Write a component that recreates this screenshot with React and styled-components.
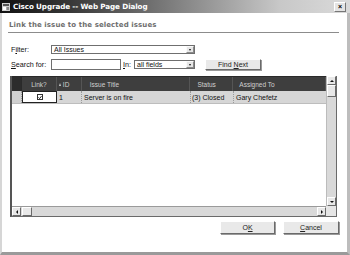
import React from "react";
import styled, { createGlobalStyle } from "styled-components";

const Global = createGlobalStyle`
  html, body { margin: 0; padding: 0; background: #ffffff; }
  body { width: 350px; height: 255px; overflow: hidden; font-family: "Liberation Sans", Arial, sans-serif; }
`;

const Window = styled.div`
  width: 350px;
  height: 255px;
  box-sizing: border-box;
  display: flex;
  flex-direction: column;
  background: #fff;
  border-left: 2px solid #d6d6d6;
  border-right: 3px solid #bdbdbd;
  border-bottom: 3px solid #9a9a9a;
`;

const TitleBar = styled.div`
  height: 13px;
  margin-left: -2px;
  margin-right: -3px;
  display: flex;
  align-items: center;
  padding: 0 4px 0 2px;
  background: linear-gradient(to right, #111 0%, #333 18%, #808080 50%, #c8c8c8 80%, #dadada 100%);
  flex-shrink: 0;
`;

const TitleIcon = styled.span`
  width: 8px;
  height: 8px;
  margin-right: 3px;
  display: inline-flex;
`;

const TitleText = styled.span`
  color: #fff;
  font-family: "DejaVu Sans", sans-serif;
  font-weight: bold;
  font-size: 7.2px;
  letter-spacing: -0.1px;
  flex: 1;
`;

const CloseBtn = styled.span`
  width: 10px;
  height: 8px;
  background: #e4e4e4;
  border: 1px solid #fff;
  border-right-color: #777;
  border-bottom-color: #777;
  display: flex;
  align-items: center;
  justify-content: center;
  font-size: 7px;
  font-weight: bold;
  color: #000;
  line-height: 1;
`;

const Body = styled.div`
  flex: 1;
  display: flex;
  flex-direction: column;
  padding: 0 10px 0 6px;
`;

const Heading = styled.div`
  margin-top: 8px;
  height: 11px;
  border-bottom: 1px solid #8c8c8c;
  color: #6e6e6e;
  font-family: "DejaVu Sans", sans-serif;
  font-size: 7px;
  font-weight: bold;
  letter-spacing: 0.1px;
  line-height: 9px;
  margin-right: -2px;
  padding-left: 1px;
`;

const Row = styled.div`
  display: flex;
  align-items: center;
  height: ${(p) => p.$h || 11}px;
  margin-top: ${(p) => p.$mt || 0}px;
  padding-left: 3px;
  font-size: 7px;
  color: #111;
`;

const Label = styled.span`
  width: ${(p) => p.$w}px;
  font-size: 7.2px;
  white-space: nowrap;
  u { text-decoration: underline; }
`;

const SelectBox = styled.div`
  width: ${(p) => p.$w}px;
  height: 9px;
  box-sizing: border-box;
  border: 1px solid #6f6f6f;
  background: #fff;
  display: flex;
  align-items: center;
  font-size: 7px;
  color: #111;
`;

const SelectText = styled.span`
  flex: 1;
  padding-left: 2px;
  white-space: nowrap;
  overflow: hidden;
`;

const DropBtn = styled.span`
  width: 8px;
  height: 7px;
  box-sizing: border-box;
  background: #e6e6e6;
  border: 1px solid #fafafa;
  border-right-color: #8a8a8a;
  border-bottom-color: #8a8a8a;
  display: flex;
  align-items: center;
  justify-content: center;
  &::after {
    content: "";
    border-left: 1.5px solid transparent;
    border-right: 1.5px solid transparent;
    border-top: 2px solid #111;
  }
`;

const TextInput = styled.div`
  width: 70px;
  height: 11px;
  box-sizing: border-box;
  border: 1px solid #6f6f6f;
  background: #fff;
`;

const PushButton = styled.div`
  width: ${(p) => p.$w}px;
  height: ${(p) => p.$h || 11}px;
  box-sizing: border-box;
  margin-left: ${(p) => p.$ml || 0}px;
  background: #e9e9e9;
  border: 1px solid #fff;
  border-right-color: #6a6a6a;
  border-bottom-color: #6a6a6a;
  box-shadow: 1px 1px 0 #9a9a9a;
  display: flex;
  align-items: center;
  justify-content: center;
  font-size: 7px;
  color: #222;
  u { text-decoration: underline; }
`;

const BtnText = styled.span`
  white-space: pre;
`;

const GridFrame = styled.div`
  margin-top: 6px;
  margin-left: 2px;
  width: 327px;
  height: 141px;
  box-sizing: border-box;
  border: 1px solid #6a6a6a;
  border-top: none;
  border-left: 2px solid #555;
  display: grid;
  grid-template-columns: 1fr 10px;
  grid-template-rows: 1fr 10px;
  background: #fff;
`;

const TableArea = styled.div`
  overflow: hidden;
  display: flex;
  flex-direction: column;
`;

const HeaderRow = styled.div`
  display: flex;
  height: 14px;
  background: #3e3e3e;
  border-top: 1px solid #2a2a2a;
  flex-shrink: 0;
`;

const HeadCell = styled.div`
  width: ${(p) => p.$w}px;
  box-sizing: border-box;
  display: flex;
  align-items: center;
  justify-content: ${(p) => (p.$center ? "center" : "flex-start")};
  padding-left: ${(p) => p.$pl || 0}px;
  color: #d0d0d0;
  font-size: 6.5px;
  border-right: 1px solid ${(p) => (p.$sel ? "#2a2a2a" : "#555")};
  background: ${(p) => (p.$sel ? "#2c2c2c" : "transparent")};
  white-space: nowrap;
`;

const SortArrow = styled.span`
  display: inline-block;
  width: 0;
  height: 0;
  margin-right: 2px;
  border-left: 1.5px solid transparent;
  border-right: 1.5px solid transparent;
  border-bottom: 3px solid #cfcfcf;
`;

const DataRow = styled.div`
  display: flex;
  height: 12px;
  background: #d6d6d6;
  border-bottom: 1px solid #bdbdbd;
  flex-shrink: 0;
  width: 315px;
`;

const Cell = styled.div`
  width: ${(p) => p.$w}px;
  box-sizing: border-box;
  display: flex;
  align-items: center;
  justify-content: ${(p) => (p.$center ? "center" : "flex-start")};
  padding-left: ${(p) => p.$pl ?? 2}px;
  font-size: 7px;
  color: #111;
  white-space: nowrap;
  border-right: 1px dotted #9a9a9a;
  background: ${(p) => p.$bg || "transparent"};
  ${(p) => (p.$boxed ? "border: 1px solid #222;" : "")}
`;

const CheckBox = styled.span`
  width: 6px;
  height: 6px;
  box-sizing: border-box;
  border: 1px solid #333;
  background: #fff;
  display: flex;
  align-items: center;
  justify-content: center;
`;

const VScroll = styled.div`
  background: #d9d9d9;
  display: flex;
  flex-direction: column;
  justify-content: space-between;
  border-left: 1px solid #bcbcbc;
`;

const HScroll = styled.div`
  background: #d9d9d9;
  display: flex;
  align-items: stretch;
  justify-content: space-between;
  border-top: 1px solid #9a9a9a;
`;

const Corner = styled.div`
  background: #e6e6e6;
`;

const ScrollBtn = styled.div`
  width: ${(p) => p.$w || 9}px;
  height: ${(p) => p.$h || 9}px;
  box-sizing: border-box;
  background: #e8e8e8;
  border: 1px solid #fff;
  border-right-color: #6a6a6a;
  border-bottom-color: #6a6a6a;
  display: flex;
  align-items: center;
  justify-content: center;
  flex-shrink: 0;
`;

const Thumb = styled(ScrollBtn)`
  margin-left: ${(p) => p.$ml || 0}px;
`;

const Arrow = styled.span`
  width: 0;
  height: 0;
  ${(p) =>
    p.$dir === "up"
      ? "border-left:2px solid transparent;border-right:2px solid transparent;border-bottom:2px solid #111;"
      : p.$dir === "down"
      ? "border-left:2px solid transparent;border-right:2px solid transparent;border-top:2px solid #111;"
      : p.$dir === "left"
      ? "border-top:2px solid transparent;border-bottom:2px solid transparent;border-right:2px solid #111;"
      : "border-top:2px solid transparent;border-bottom:2px solid transparent;border-left:2px solid #111;"}
`;

const Group = styled.div`
  display: flex;
  flex-direction: ${(p) => (p.$col ? "column" : "row")};
`;

const ButtonRow = styled.div`
  display: flex;
  justify-content: flex-end;
  gap: 8px;
  margin-top: 4px;
  margin-right: -2px;
`;

const columns = [
  { key: "sel", w: 10 },
  { key: "link", w: 35, label: "Link?", center: true },
  { key: "id", w: 25, label: "ID", sort: true, pl: 2 },
  { key: "title", w: 109, label: "Issue Title", pl: 8 },
  { key: "status", w: 43, label: "Status", pl: 7 },
  { key: "assigned", w: 93, label: "Assigned To", pl: 6 },
];

export default function App() {
  return (
    <>
      <Global />
      <Window>
        <TitleBar>
          <TitleIcon>
            <svg width="8" height="8" viewBox="0 0 8 8">
              <rect x="0" y="0" width="8" height="8" fill="#cfcfcf" />
              <rect x="1" y="1" width="6" height="2" fill="#555" />
              <rect x="1" y="4" width="3" height="3" fill="#fff" />
              <rect x="4.5" y="4" width="2.5" height="3" fill="#888" />
            </svg>
          </TitleIcon>
          <TitleText>Cisco Upgrade -- Web Page Dialog</TitleText>
          <CloseBtn>×</CloseBtn>
        </TitleBar>
        <Body>
          <Heading>Link the issue to the selected issues</Heading>
          <Row $mt={12} $h={9}>
            <Label $w={40}>F<u>i</u>lter:</Label>
            <SelectBox $w={144}>
              <SelectText>All Issues</SelectText>
              <DropBtn />
            </SelectBox>
          </Row>
          <Row $mt={5} $h={11}>
            <Label $w={40}><u>S</u>earch for:</Label>
            <TextInput />
            <Label $w={13}>&nbsp;<u>I</u>n:</Label>
            <SelectBox $w={61}>
              <SelectText>all fields</SelectText>
              <DropBtn />
            </SelectBox>
            <PushButton $w={56} $ml={10}><BtnText>Find <u>N</u>ext</BtnText></PushButton>
          </Row>
          <GridFrame>
            <TableArea>
              <HeaderRow>
                {columns.map((c) => (
                  <HeadCell key={c.key} $w={c.w} $center={c.center} $pl={c.pl} $sel={c.key === "sel"}>
                    {c.sort && <SortArrow />}
                    {c.label}
                  </HeadCell>
                ))}
              </HeaderRow>
              <DataRow>
                <Cell $w={10} $bg="#d0d0d0" />
                <Cell $w={35} $center $pl={0} $bg="#fff" $boxed>
                  <CheckBox>
                    <svg width="5" height="5" viewBox="0 0 5 5">
                      <path d="M0.6 2.4 L2 3.8 L4.4 0.8" stroke="#000" strokeWidth="1.1" fill="none" />
                    </svg>
                  </CheckBox>
                </Cell>
                <Cell $w={25}>1</Cell>
                <Cell $w={109}>Server is on fire</Cell>
                <Cell $w={43} $pl={1}>(3) Closed</Cell>
                <Cell $w={93}>Gary Chefetz</Cell>
              </DataRow>
            </TableArea>
            <VScroll>
              <Group $col>
                <ScrollBtn><Arrow $dir="up" /></ScrollBtn>
                <Thumb $h={12} />
              </Group>
              <ScrollBtn><Arrow $dir="down" /></ScrollBtn>
            </VScroll>
            <HScroll>
              <Group>
                <ScrollBtn><Arrow $dir="left" /></ScrollBtn>
                <Thumb $w={10} $ml={1} />
              </Group>
              <ScrollBtn><Arrow $dir="right" /></ScrollBtn>
            </HScroll>
            <Corner />
          </GridFrame>
          <ButtonRow>
            <PushButton $w={55} $h={13}><BtnText>O<u>K</u></BtnText></PushButton>
            <PushButton $w={56} $h={13}><BtnText><u>C</u>ancel</BtnText></PushButton>
          </ButtonRow>
        </Body>
      </Window>
    </>
  );
}
